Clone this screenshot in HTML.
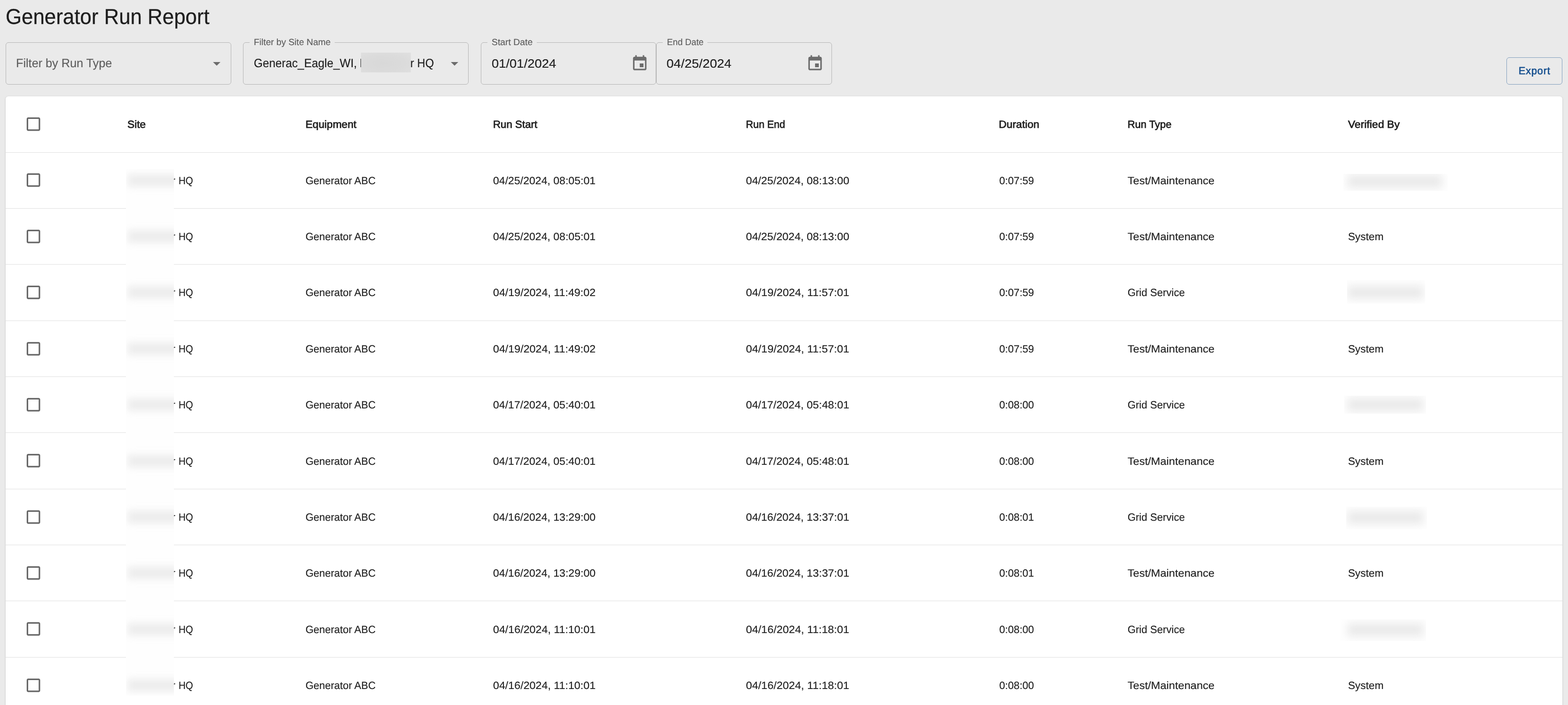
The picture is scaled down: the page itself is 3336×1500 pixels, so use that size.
<!DOCTYPE html>
<html lang="en">
<head>
<meta charset="utf-8">
<title>Generator Run Report</title>
<style>
html,body{margin:0;padding:0;}
body{width:3336px;height:1500px;overflow:hidden;background:#eaeaea;position:relative;font-family:"Liberation Sans",Arial,sans-serif;}
#page{position:absolute;left:0;top:0;width:3336px;height:1500px;overflow:hidden;will-change:transform;}
.t{position:absolute;white-space:pre;margin:0;padding:0;font-weight:400;text-rendering:geometricPrecision;transform-origin:0 0;}
.title{font-size:45.85px;line-height:64px;color:#1e1e1e;-webkit-text-stroke:0.3px #1e1e1e;}
.ph{font-size:25.72px;line-height:36px;color:#5e5e5e;-webkit-text-stroke:0.18px #5e5e5e;}
.lab{font-size:19.3px;line-height:27px;color:#5e5e5e;-webkit-text-stroke:0.18px #5e5e5e;}
.val{font-size:25.72px;line-height:36px;color:#1e1e1e;-webkit-text-stroke:0.18px #1e1e1e;}
.exp{font-size:22.1px;line-height:31px;color:#17508f;letter-spacing:0.9px;-webkit-text-stroke:0.7px #17508f;}
.th{font-size:22.1px;line-height:31px;color:#212121;-webkit-text-stroke:0.8px #212121;}
.td{font-size:22.5px;line-height:31px;color:#212121;-webkit-text-stroke:0.18px #212121;}
.box{position:absolute;box-sizing:border-box;border:1px solid #b4b4b4;border-radius:6px;}
.notch{position:absolute;height:3px;background:#eaeaea;}
.card{position:absolute;left:12px;top:205px;width:3312px;height:1320px;background:#fff;border-radius:6px;box-shadow:0 3px 1.5px -1.5px rgba(0,0,0,.2),0 1.5px 1.5px 0 rgba(0,0,0,.14),0 1.5px 4.5px 0 rgba(0,0,0,.12);}
.line{position:absolute;left:12px;width:3312px;height:1px;background:#e0e0e0;}
.ico{position:absolute;}
.strip{position:absolute;left:268px;top:360px;width:102px;height:1120px;background:#fefefe;overflow:hidden;z-index:2;}
.band{position:absolute;left:4px;width:150px;height:26px;background:#ececec;filter:blur(8px);}
.vrect{position:absolute;background:#fefefe;overflow:hidden;}
.vblob{position:absolute;height:28px;margin-top:-1px;background:#eaeaea;filter:blur(8.5px);}
.fblur{position:absolute;left:768px;top:112px;width:106px;height:42px;background:radial-gradient(ellipse at 45% 55%,#d8d8d8 0%,#dbdbdb 55%,#e0e0e0 100%);}
.stem{position:absolute;left:766.5px;top:125px;width:1.5px;height:18px;background:#2a2a2a;}
.btn{position:absolute;box-sizing:border-box;left:3205px;top:122px;width:119px;height:58px;border:1px solid #819ebd;border-radius:6px;}
</style>
</head>
<body>
<div id="page">
<div class="box" style="left:12px;top:90px;width:480px;height:90px"></div>
<div class="box" style="left:517px;top:90px;width:480px;height:90px"></div>
<div class="notch" style="left:531px;top:89px;width:181px"></div>
<div class="box" style="left:1023px;top:90px;width:373px;height:90px"></div>
<div class="notch" style="left:1037px;top:89px;width:105px"></div>
<div class="box" style="left:1396px;top:90px;width:374px;height:90px"></div>
<div class="notch" style="left:1410px;top:89px;width:95px"></div>
<svg class="ico" style="left:442.46px;top:116.28px" width="38.2" height="38.2" viewBox="0 0 24 24"><path d="M7 10l5 5 5-5z" fill="#6c6c6c"/></svg>
<svg class="ico" style="left:947.66px;top:116.28px" width="38.2" height="38.2" viewBox="0 0 24 24"><path d="M7 10l5 5 5-5z" fill="#6c6c6c"/></svg>
<svg class="ico" style="left:1342.02px;top:116.46px" width="38.2" height="38.2" viewBox="0 0 24 24"><path d="M17 12h-5v5h5v-5zM16 1v2H8V1H6v2H5c-1.11 0-1.99.9-1.99 2L3 19c0 1.1.89 2 2 2h14c1.1 0 2-.9 2-2V5c0-1.1-.9-2-2-2h-1V1h-2zm3 18H5V8h14v11z" fill="#6c6c6c"/></svg>
<svg class="ico" style="left:1715.42px;top:116.46px" width="38.2" height="38.2" viewBox="0 0 24 24"><path d="M17 12h-5v5h5v-5zM16 1v2H8V1H6v2H5c-1.11 0-1.99.9-1.99 2L3 19c0 1.1.89 2 2 2h14c1.1 0 2-.9 2-2V5c0-1.1-.9-2-2-2h-1V1h-2zm3 18H5V8h14v11z" fill="#6c6c6c"/></svg>
<div class="fblur"></div>
<div class="stem"></div>
<div class="btn"></div>
<div class="card"></div>
<div class="line" style="top:324px"></div>
<div class="line" style="top:443px"></div>
<div class="line" style="top:562px"></div>
<div class="line" style="top:682px"></div>
<div class="line" style="top:801px"></div>
<div class="line" style="top:920px"></div>
<div class="line" style="top:1040px"></div>
<div class="line" style="top:1159px"></div>
<div class="line" style="top:1278px"></div>
<div class="line" style="top:1398px"></div>
<svg class="ico" style="left:52.22px;top:245.07px" width="38.27" height="38.27" viewBox="0 0 24 24"><path d="M19 5v14H5V5h14m0-2H5c-1.1 0-2 .9-2 2v14c0 1.1.9 2 2 2h14c1.1 0 2-.9 2-2V5c0-1.1-.9-2-2-2z" fill="#666"/></svg>
<svg class="ico" style="left:52.22px;top:364.07px" width="38.27" height="38.27" viewBox="0 0 24 24"><path d="M19 5v14H5V5h14m0-2H5c-1.1 0-2 .9-2 2v14c0 1.1.9 2 2 2h14c1.1 0 2-.9 2-2V5c0-1.1-.9-2-2-2z" fill="#666"/></svg>
<svg class="ico" style="left:52.22px;top:484.07px" width="38.27" height="38.27" viewBox="0 0 24 24"><path d="M19 5v14H5V5h14m0-2H5c-1.1 0-2 .9-2 2v14c0 1.1.9 2 2 2h14c1.1 0 2-.9 2-2V5c0-1.1-.9-2-2-2z" fill="#666"/></svg>
<svg class="ico" style="left:52.22px;top:603.07px" width="38.27" height="38.27" viewBox="0 0 24 24"><path d="M19 5v14H5V5h14m0-2H5c-1.1 0-2 .9-2 2v14c0 1.1.9 2 2 2h14c1.1 0 2-.9 2-2V5c0-1.1-.9-2-2-2z" fill="#666"/></svg>
<svg class="ico" style="left:52.22px;top:723.07px" width="38.27" height="38.27" viewBox="0 0 24 24"><path d="M19 5v14H5V5h14m0-2H5c-1.1 0-2 .9-2 2v14c0 1.1.9 2 2 2h14c1.1 0 2-.9 2-2V5c0-1.1-.9-2-2-2z" fill="#666"/></svg>
<svg class="ico" style="left:52.22px;top:842.07px" width="38.27" height="38.27" viewBox="0 0 24 24"><path d="M19 5v14H5V5h14m0-2H5c-1.1 0-2 .9-2 2v14c0 1.1.9 2 2 2h14c1.1 0 2-.9 2-2V5c0-1.1-.9-2-2-2z" fill="#666"/></svg>
<svg class="ico" style="left:52.22px;top:961.07px" width="38.27" height="38.27" viewBox="0 0 24 24"><path d="M19 5v14H5V5h14m0-2H5c-1.1 0-2 .9-2 2v14c0 1.1.9 2 2 2h14c1.1 0 2-.9 2-2V5c0-1.1-.9-2-2-2z" fill="#666"/></svg>
<svg class="ico" style="left:52.22px;top:1081.07px" width="38.27" height="38.27" viewBox="0 0 24 24"><path d="M19 5v14H5V5h14m0-2H5c-1.1 0-2 .9-2 2v14c0 1.1.9 2 2 2h14c1.1 0 2-.9 2-2V5c0-1.1-.9-2-2-2z" fill="#666"/></svg>
<svg class="ico" style="left:52.22px;top:1200.07px" width="38.27" height="38.27" viewBox="0 0 24 24"><path d="M19 5v14H5V5h14m0-2H5c-1.1 0-2 .9-2 2v14c0 1.1.9 2 2 2h14c1.1 0 2-.9 2-2V5c0-1.1-.9-2-2-2z" fill="#666"/></svg>
<svg class="ico" style="left:52.22px;top:1319.07px" width="38.27" height="38.27" viewBox="0 0 24 24"><path d="M19 5v14H5V5h14m0-2H5c-1.1 0-2 .9-2 2v14c0 1.1.9 2 2 2h14c1.1 0 2-.9 2-2V5c0-1.1-.9-2-2-2z" fill="#666"/></svg>
<svg class="ico" style="left:52.22px;top:1439.07px" width="38.27" height="38.27" viewBox="0 0 24 24"><path d="M19 5v14H5V5h14m0-2H5c-1.1 0-2 .9-2 2v14c0 1.1.9 2 2 2h14c1.1 0 2-.9 2-2V5c0-1.1-.9-2-2-2z" fill="#666"/></svg>
<div class="strip"><div class="band" style="top:11.0px"></div><div class="band" style="top:130.0px"></div><div class="band" style="top:249.0px"></div><div class="band" style="top:369.0px"></div><div class="band" style="top:488.0px"></div><div class="band" style="top:608.0px"></div><div class="band" style="top:727.0px"></div><div class="band" style="top:846.0px"></div><div class="band" style="top:966.0px"></div><div class="band" style="top:1085.0px"></div></div>
<div class="vrect" style="left:2858px;top:370px;width:222px;height:36px"><div class="vblob" style="left:9px;top:3.2px;width:201px"></div></div>
<div class="vrect" style="left:2866px;top:596px;width:166px;height:50px"><div class="vblob" style="left:1px;top:13.3px;width:161px"></div></div>
<div class="vrect" style="left:2860px;top:842px;width:174px;height:38px"><div class="vblob" style="left:7px;top:6.4px;width:161px"></div></div>
<div class="vrect" style="left:2864px;top:1078px;width:172px;height:48px"><div class="vblob" style="left:3px;top:10.4px;width:161px"></div></div>
<div class="vrect" style="left:2852px;top:1318px;width:182px;height:46px"><div class="vblob" style="left:15px;top:9.4px;width:161px"></div></div>
<div class="t title" style="left:11.73px;top:3px;transform:scaleX(0.9561);">Generator Run Report</div>
<div class="t ph" style="left:34.03px;top:117px;transform:scaleX(0.9811);">Filter by Run Type</div>
<div class="t lab" style="left:539.84px;top:77px;transform:scaleX(0.9976);">Filter by Site Name</div>
<div class="t val" style="left:539.64px;top:117px;transform:scaleX(0.9465);">Generac_Eagle_WI,</div>
<div class="t val" style="left:873.16px;top:117px;transform:scaleX(0.9283);">r HQ</div>
<div class="t lab" style="left:1045.59px;top:77px;transform:scaleX(1.0051);">Start Date</div>
<div class="t val" style="left:1045.78px;top:118px;transform:scaleX(1.0663);">01/01/2024</div>
<div class="t lab" style="left:1418.52px;top:77px;transform:scaleX(0.9702);">End Date</div>
<div class="t val" style="left:1418.42px;top:118px;transform:scaleX(1.0737);">04/25/2024</div>
<div class="t exp" style="left:3231.26px;top:135px;transform:scaleX(0.9777);">Export</div>
<div class="t th" style="left:271.38px;top:249px;transform:scaleX(1.0297);">Site</div>
<div class="t th" style="left:650.28px;top:249px;transform:scaleX(1.0258);">Equipment</div>
<div class="t th" style="left:1049.39px;top:249px;transform:scaleX(1.0087);">Run Start</div>
<div class="t th" style="left:1586.92px;top:249px;transform:scaleX(0.9705);">Run End</div>
<div class="t th" style="left:2125.48px;top:249px;transform:scaleX(1.0333);">Duration</div>
<div class="t th" style="left:2398.9px;top:249px;transform:scaleX(0.9927);">Run Type</div>
<div class="t th" style="left:2868.42px;top:249px;transform:scaleX(1.0407);">Verified By</div>
<div class="t td" style="left:365.71px;top:369px;transform:scaleX(0.9117);word-spacing:1.59px;z-index:1;">r HQ</div>
<div class="t td" style="left:650.41px;top:369px;transform:scaleX(0.9768);">Generator ABC</div>
<div class="t td" style="left:1049.34px;top:369px;transform:scaleX(1.0254);">04/25/2024, 08:05:01</div>
<div class="t td" style="left:1586.84px;top:369px;transform:scaleX(1.0338);">04/25/2024, 08:13:00</div>
<div class="t td" style="left:2125.69px;top:369px;transform:scaleX(0.9848);">0:07:59</div>
<div class="t td" style="left:2399.29px;top:369px;transform:scaleX(1.0487);">Test/Maintenance</div>
<div class="t td" style="left:365.71px;top:488px;transform:scaleX(0.9117);word-spacing:1.59px;z-index:1;">r HQ</div>
<div class="t td" style="left:650.41px;top:488px;transform:scaleX(0.9768);">Generator ABC</div>
<div class="t td" style="left:1049.34px;top:488px;transform:scaleX(1.0254);">04/25/2024, 08:05:01</div>
<div class="t td" style="left:1586.84px;top:488px;transform:scaleX(1.0338);">04/25/2024, 08:13:00</div>
<div class="t td" style="left:2125.69px;top:488px;transform:scaleX(0.9848);">0:07:59</div>
<div class="t td" style="left:2399.29px;top:488px;transform:scaleX(1.0487);">Test/Maintenance</div>
<div class="t td" style="left:2867.58px;top:488px;transform:scaleX(1.0075);">System</div>
<div class="t td" style="left:365.71px;top:607px;transform:scaleX(0.9117);word-spacing:1.59px;z-index:1;">r HQ</div>
<div class="t td" style="left:650.41px;top:607px;transform:scaleX(0.9768);">Generator ABC</div>
<div class="t td" style="left:1049.34px;top:607px;transform:scaleX(1.0335);">04/19/2024, 11:49:02</div>
<div class="t td" style="left:1586.84px;top:607px;transform:scaleX(1.042);">04/19/2024, 11:57:01</div>
<div class="t td" style="left:2125.69px;top:607px;transform:scaleX(0.9848);">0:07:59</div>
<div class="t td" style="left:2399.1px;top:607px;transform:scaleX(0.9841);">Grid Service</div>
<div class="t td" style="left:365.71px;top:727px;transform:scaleX(0.9117);word-spacing:1.59px;z-index:1;">r HQ</div>
<div class="t td" style="left:650.41px;top:727px;transform:scaleX(0.9768);">Generator ABC</div>
<div class="t td" style="left:1049.34px;top:727px;transform:scaleX(1.0335);">04/19/2024, 11:49:02</div>
<div class="t td" style="left:1586.84px;top:727px;transform:scaleX(1.042);">04/19/2024, 11:57:01</div>
<div class="t td" style="left:2125.69px;top:727px;transform:scaleX(0.9848);">0:07:59</div>
<div class="t td" style="left:2399.29px;top:727px;transform:scaleX(1.0487);">Test/Maintenance</div>
<div class="t td" style="left:2867.58px;top:727px;transform:scaleX(1.0075);">System</div>
<div class="t td" style="left:365.71px;top:846px;transform:scaleX(0.9117);word-spacing:1.59px;z-index:1;">r HQ</div>
<div class="t td" style="left:650.41px;top:846px;transform:scaleX(0.9768);">Generator ABC</div>
<div class="t td" style="left:1049.34px;top:846px;transform:scaleX(1.0254);">04/17/2024, 05:40:01</div>
<div class="t td" style="left:1586.84px;top:846px;transform:scaleX(1.0338);">04/17/2024, 05:48:01</div>
<div class="t td" style="left:2125.69px;top:846px;transform:scaleX(0.9848);">0:08:00</div>
<div class="t td" style="left:2399.1px;top:846px;transform:scaleX(0.9841);">Grid Service</div>
<div class="t td" style="left:365.71px;top:966px;transform:scaleX(0.9117);word-spacing:1.59px;z-index:1;">r HQ</div>
<div class="t td" style="left:650.41px;top:966px;transform:scaleX(0.9768);">Generator ABC</div>
<div class="t td" style="left:1049.34px;top:966px;transform:scaleX(1.0254);">04/17/2024, 05:40:01</div>
<div class="t td" style="left:1586.84px;top:966px;transform:scaleX(1.0338);">04/17/2024, 05:48:01</div>
<div class="t td" style="left:2125.69px;top:966px;transform:scaleX(0.9848);">0:08:00</div>
<div class="t td" style="left:2399.29px;top:966px;transform:scaleX(1.0487);">Test/Maintenance</div>
<div class="t td" style="left:2867.58px;top:966px;transform:scaleX(1.0075);">System</div>
<div class="t td" style="left:365.71px;top:1085px;transform:scaleX(0.9117);word-spacing:1.59px;z-index:1;">r HQ</div>
<div class="t td" style="left:650.41px;top:1085px;transform:scaleX(0.9768);">Generator ABC</div>
<div class="t td" style="left:1049.34px;top:1085px;transform:scaleX(1.0254);">04/16/2024, 13:29:00</div>
<div class="t td" style="left:1586.84px;top:1085px;transform:scaleX(1.0338);">04/16/2024, 13:37:01</div>
<div class="t td" style="left:2125.69px;top:1085px;transform:scaleX(0.9848);">0:08:01</div>
<div class="t td" style="left:2399.1px;top:1085px;transform:scaleX(0.9841);">Grid Service</div>
<div class="t td" style="left:365.71px;top:1204px;transform:scaleX(0.9117);word-spacing:1.59px;z-index:1;">r HQ</div>
<div class="t td" style="left:650.41px;top:1204px;transform:scaleX(0.9768);">Generator ABC</div>
<div class="t td" style="left:1049.34px;top:1204px;transform:scaleX(1.0254);">04/16/2024, 13:29:00</div>
<div class="t td" style="left:1586.84px;top:1204px;transform:scaleX(1.0338);">04/16/2024, 13:37:01</div>
<div class="t td" style="left:2125.69px;top:1204px;transform:scaleX(0.9848);">0:08:01</div>
<div class="t td" style="left:2399.29px;top:1204px;transform:scaleX(1.0487);">Test/Maintenance</div>
<div class="t td" style="left:2867.58px;top:1204px;transform:scaleX(1.0075);">System</div>
<div class="t td" style="left:365.71px;top:1324px;transform:scaleX(0.9117);word-spacing:1.59px;z-index:1;">r HQ</div>
<div class="t td" style="left:650.41px;top:1324px;transform:scaleX(0.9768);">Generator ABC</div>
<div class="t td" style="left:1049.34px;top:1324px;transform:scaleX(1.0335);">04/16/2024, 11:10:01</div>
<div class="t td" style="left:1586.84px;top:1324px;transform:scaleX(1.042);">04/16/2024, 11:18:01</div>
<div class="t td" style="left:2125.69px;top:1324px;transform:scaleX(0.9848);">0:08:00</div>
<div class="t td" style="left:2399.1px;top:1324px;transform:scaleX(0.9841);">Grid Service</div>
<div class="t td" style="left:365.71px;top:1443px;transform:scaleX(0.9117);word-spacing:1.59px;z-index:1;">r HQ</div>
<div class="t td" style="left:650.41px;top:1443px;transform:scaleX(0.9768);">Generator ABC</div>
<div class="t td" style="left:1049.34px;top:1443px;transform:scaleX(1.0335);">04/16/2024, 11:10:01</div>
<div class="t td" style="left:1586.84px;top:1443px;transform:scaleX(1.042);">04/16/2024, 11:18:01</div>
<div class="t td" style="left:2125.69px;top:1443px;transform:scaleX(0.9848);">0:08:00</div>
<div class="t td" style="left:2399.29px;top:1443px;transform:scaleX(1.0487);">Test/Maintenance</div>
<div class="t td" style="left:2867.58px;top:1443px;transform:scaleX(1.0075);">System</div>
</div>
</body>
</html>
